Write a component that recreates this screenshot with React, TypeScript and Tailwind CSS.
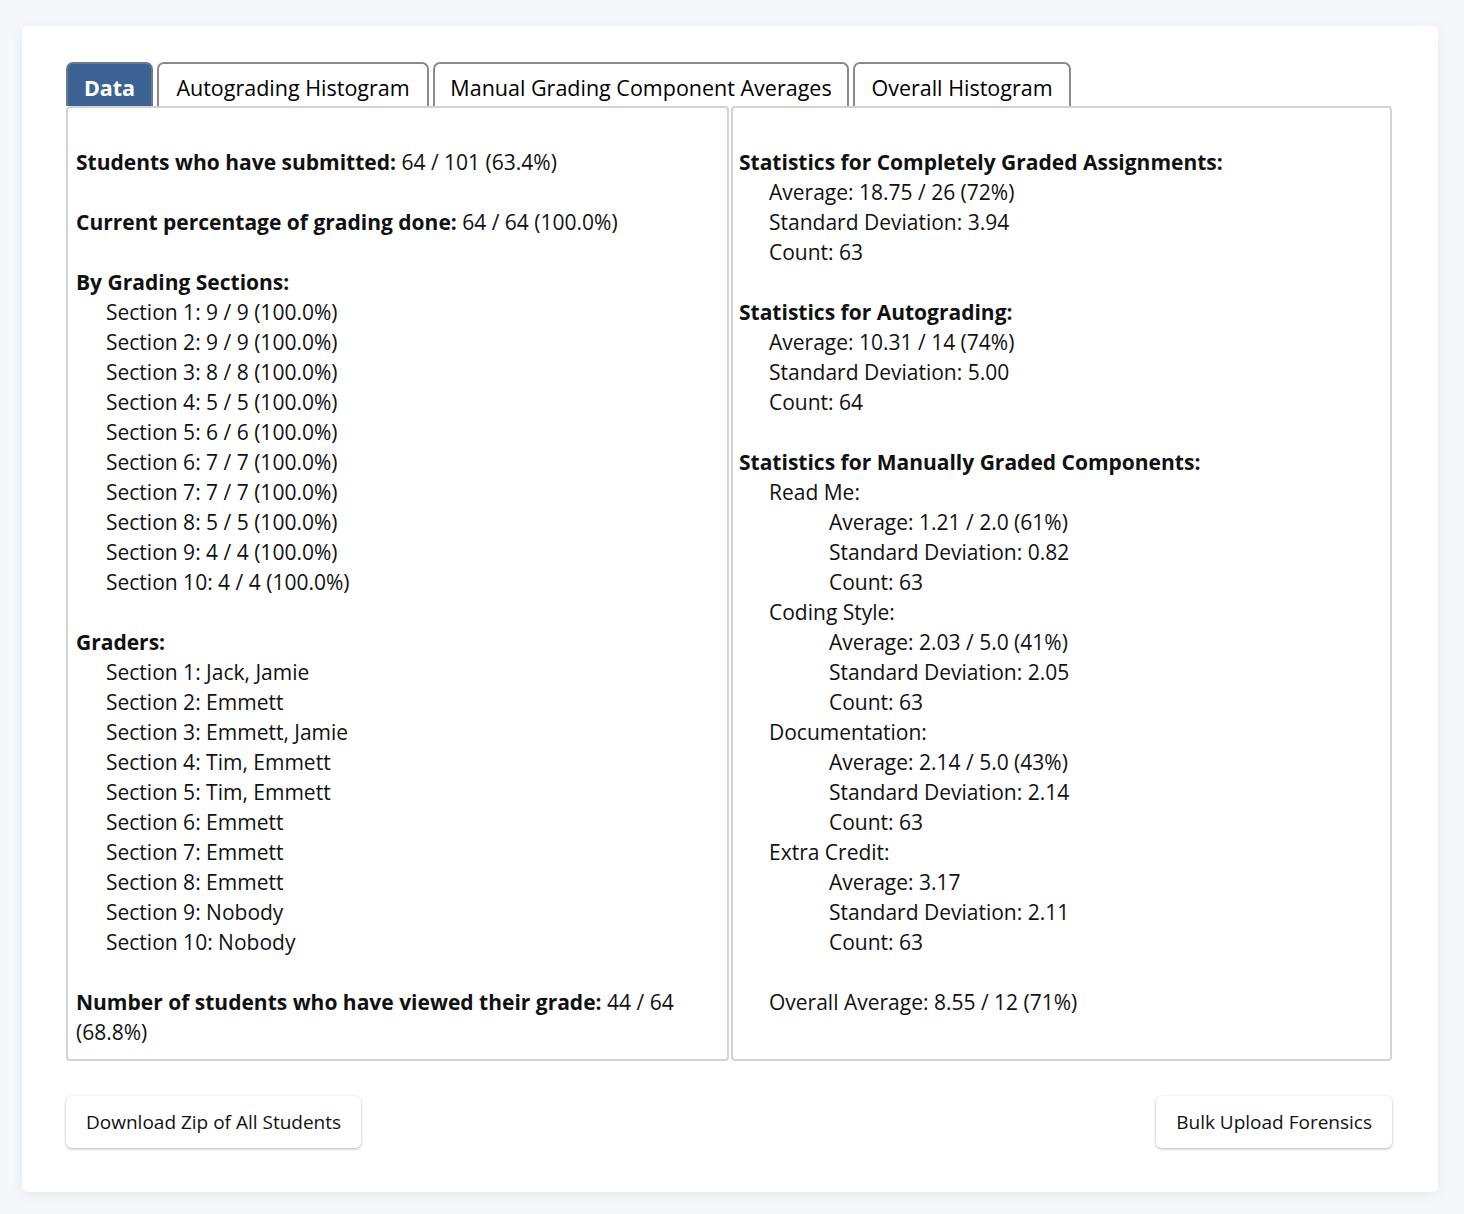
const sections = [
  "Section 1: 9 / 9 (100.0%)",
  "Section 2: 9 / 9 (100.0%)",
  "Section 3: 8 / 8 (100.0%)",
  "Section 4: 5 / 5 (100.0%)",
  "Section 5: 6 / 6 (100.0%)",
  "Section 6: 7 / 7 (100.0%)",
  "Section 7: 7 / 7 (100.0%)",
  "Section 8: 5 / 5 (100.0%)",
  "Section 9: 4 / 4 (100.0%)",
  "Section 10: 4 / 4 (100.0%)",
];

const graders = [
  "Section 1: Jack, Jamie",
  "Section 2: Emmett",
  "Section 3: Emmett, Jamie",
  "Section 4: Tim, Emmett",
  "Section 5: Tim, Emmett",
  "Section 6: Emmett",
  "Section 7: Emmett",
  "Section 8: Emmett",
  "Section 9: Nobody",
  "Section 10: Nobody",
];

const components = [
  { name: "Read Me:", lines: ["Average: 1.21 / 2.0 (61%)", "Standard Deviation: 0.82", "Count: 63"] },
  { name: "Coding Style:", lines: ["Average: 2.03 / 5.0 (41%)", "Standard Deviation: 2.05", "Count: 63"] },
  { name: "Documentation:", lines: ["Average: 2.14 / 5.0 (43%)", "Standard Deviation: 2.14", "Count: 63"] },
  { name: "Extra Credit:", lines: ["Average: 3.17", "Standard Deviation: 2.11", "Count: 63"] },
];

const tabs = [
  { label: "Data", w: "w-[87px]", active: true },
  { label: "Autograding Histogram", w: "w-[272px]", active: false },
  { label: "Manual Grading Component Averages", w: "w-[416px]", active: false },
  { label: "Overall Histogram", w: "w-[218px]", active: false },
];

const Line = ({ children, indent = 0 }: { children: React.ReactNode; indent?: number }) => (
  <div className={indent === 2 ? "pl-[90px]" : indent === 1 ? "pl-[30px]" : ""}>{children}</div>
);

const Gap = () => <div className="h-[30px]" />;

export default function App() {
  return (
    <div
      className="min-h-[1214px] bg-[#f5f8fb] pt-[26px] pl-[22px] text-[#111]"
      style={{ fontFamily: "'Open Sans', 'Noto Sans', sans-serif" }}
    >
      <div className="w-[1416px] bg-white rounded-[6px] shadow-[0_2px_12px_rgba(30,50,80,0.08)] pt-[36px] pb-[44px] pl-[44px] pr-[46px]">
        <div className="flex gap-[4px] items-end">
          {tabs.map((t) => (
            <div
              key={t.label}
              className={`${t.w} h-[44px] flex items-center justify-center border-2 border-b-0 rounded-t-[7px] text-[21.5px] whitespace-nowrap pt-[7px] ${
                t.active ? "bg-[#3d6394] border-[#6b7a8c] text-white font-bold" : "bg-white border-[#8a8a8a] text-black"
              }`}
            >
              {t.label}
            </div>
          ))}
        </div>

        <div className="grid grid-cols-[663px_661px] gap-[2px] text-[21px] leading-[30px]">
          <div className="border-2 border-[#d3d3d3] rounded-[4px] pt-[39px] pb-[12px] pl-[8px] pr-[8px]">
            <Line>
              <b>Students who have submitted:</b> 64 / 101 (63.4%)
            </Line>
            <Gap />
            <Line>
              <b>Current percentage of grading done:</b> 64 / 64 (100.0%)
            </Line>
            <Gap />
            <Line>
              <b>By Grading Sections:</b>
            </Line>
            {sections.map((s) => (
              <Line key={s} indent={1}>
                {s}
              </Line>
            ))}
            <Gap />
            <Line>
              <b>Graders:</b>
            </Line>
            {graders.map((s) => (
              <Line key={s} indent={1}>
                {s}
              </Line>
            ))}
            <Gap />
            <div className="whitespace-nowrap">
              <b>Number of students who have viewed their grade:</b> 44 / 64
              <br />
              (68.8%)
            </div>
          </div>

          <div className="border-2 border-[#d3d3d3] rounded-[4px] pt-[39px] pb-[12px] pl-[6px] pr-[8px]">
            <Line>
              <b>Statistics for Completely Graded Assignments:</b>
            </Line>
            <Line indent={1}>Average: 18.75 / 26 (72%)</Line>
            <Line indent={1}>Standard Deviation: 3.94</Line>
            <Line indent={1}>Count: 63</Line>
            <Gap />
            <Line>
              <b>Statistics for Autograding:</b>
            </Line>
            <Line indent={1}>Average: 10.31 / 14 (74%)</Line>
            <Line indent={1}>Standard Deviation: 5.00</Line>
            <Line indent={1}>Count: 64</Line>
            <Gap />
            <Line>
              <b>Statistics for Manually Graded Components:</b>
            </Line>
            {components.map((c) => (
              <div key={c.name}>
                <Line indent={1}>{c.name}</Line>
                {c.lines.map((l) => (
                  <Line key={l} indent={2}>
                    {l}
                  </Line>
                ))}
              </div>
            ))}
            <Gap />
            <Line indent={1}>Overall Average: 8.55 / 12 (71%)</Line>
          </div>
        </div>

        <div className="flex justify-between mt-[35px]">
          <button className="h-[52px] px-[20px] bg-white rounded-[6px] text-[19px] text-[#111] shadow-[0_1px_3px_rgba(0,0,0,0.3)]">
            Download Zip of All Students
          </button>
          <button className="h-[52px] px-[20px] bg-white rounded-[6px] text-[19px] text-[#111] shadow-[0_1px_3px_rgba(0,0,0,0.3)]">
            Bulk Upload Forensics
          </button>
        </div>
      </div>
    </div>
  );
}
